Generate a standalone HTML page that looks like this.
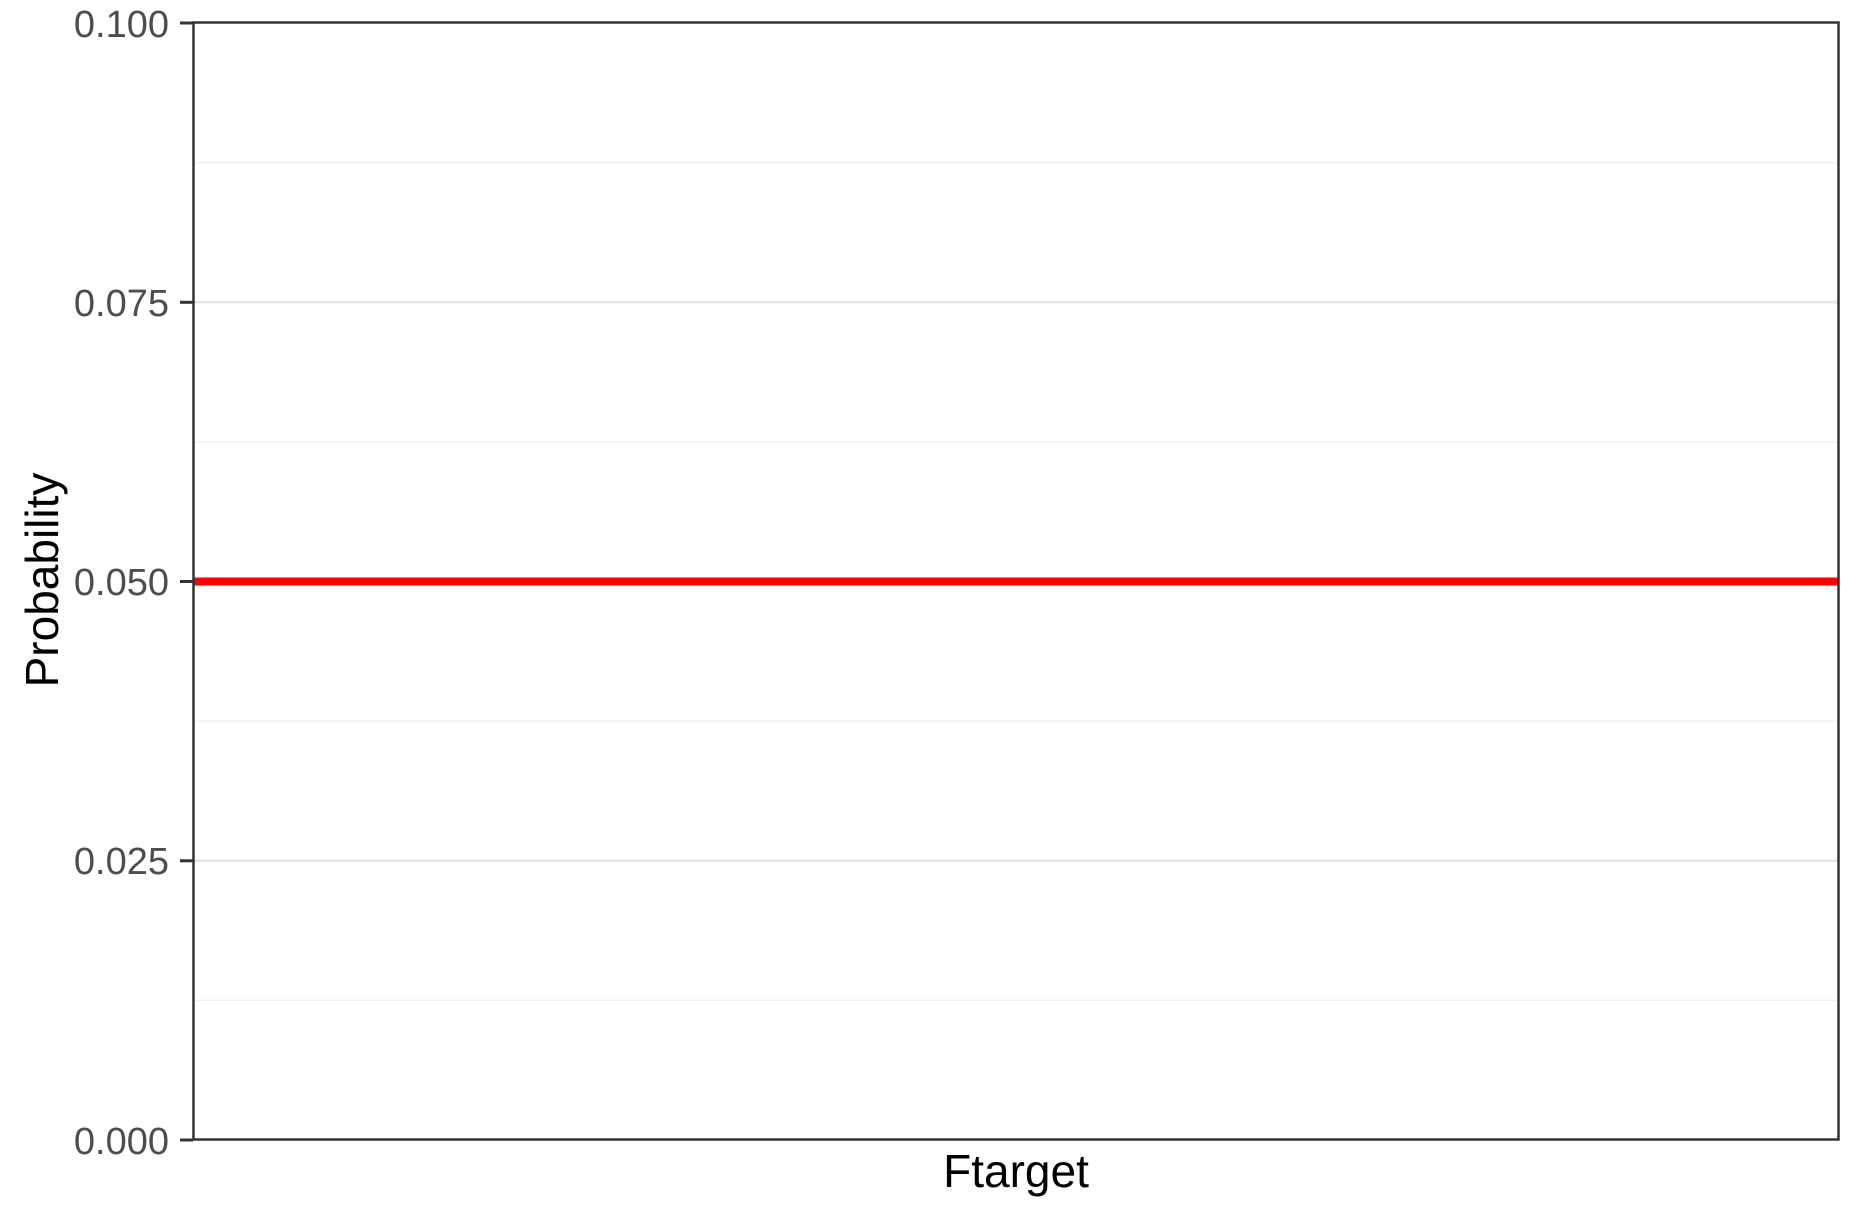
<!DOCTYPE html>
<html><head><meta charset="utf-8"><style>html,body{margin:0;padding:0;background:#fff}svg{display:block}</style></head>
<body>
<svg width="1862" height="1218" xmlns="http://www.w3.org/2000/svg">
<rect width="1862" height="1218" fill="#fff"/>
<g stroke="#f0f0f0" stroke-width="1.5">
<line x1="193" x2="1839" y1="162.6" y2="162.6"/>
<line x1="193" x2="1839" y1="441.9" y2="441.9"/>
<line x1="193" x2="1839" y1="721.1" y2="721.1"/>
<line x1="193" x2="1839" y1="1000.4" y2="1000.4"/>
</g>
<g stroke="#e6e6e6" stroke-width="2.5">
<line x1="193" x2="1839" y1="302.3" y2="302.3"/>
<line x1="193" x2="1839" y1="860.8" y2="860.8"/>
</g>
<line x1="193" x2="1839" y1="581.5" y2="581.5" stroke="#ff0000" stroke-width="8"/>
<rect x="193.5" y="22.5" width="1645" height="1117" fill="none" stroke="#333" stroke-width="2.5"/>
<g stroke="#333" stroke-width="3">
<line x1="180" x2="193" y1="23" y2="23"/>
<line x1="180" x2="193" y1="302.3" y2="302.3"/>
<line x1="180" x2="193" y1="581.5" y2="581.5"/>
<line x1="180" x2="193" y1="860.8" y2="860.8"/>
<line x1="180" x2="193" y1="1140" y2="1140"/>
</g>
<g font-family="Liberation Sans, sans-serif" font-size="38" fill="#4d4d4d" text-anchor="end">
<text x="169" y="37">0.100</text>
<text x="169" y="316">0.075</text>
<text x="169" y="595">0.050</text>
<text x="169" y="874">0.025</text>
<text x="169" y="1154">0.000</text>
</g>
<text x="1016" y="1187" font-family="Liberation Sans, sans-serif" font-size="46" fill="#000" text-anchor="middle">Ftarget</text>
<text transform="translate(58,580) rotate(-90)" font-family="Liberation Sans, sans-serif" font-size="46" fill="#000" text-anchor="middle">Probability</text>
</svg>
</body></html>
